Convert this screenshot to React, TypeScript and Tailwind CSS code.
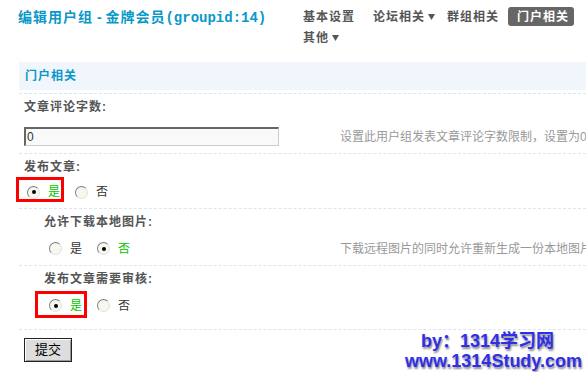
import React from 'react';

type Opt = { label: string; checked?: boolean };

function Radio({ checked }: { checked?: boolean }) {
  return (
    <span className="inline-flex h-[13px] w-[13px] shrink-0 items-center justify-center rounded-full border border-t-[#7f7f7f] border-l-[#7f7f7f] border-r-[#e2e2da] border-b-[#e2e2da] bg-[#f7f7f0]">
      {checked && <span className="h-[4px] w-[4px] rounded-full bg-black" />}
    </span>
  );
}

// radio + label, optionally with the red annotation frame
function Option({ opt, box }: { opt: Opt; box?: string }) {
  return (
    <span className="relative flex h-[16px] items-center gap-[8px]">
      <Radio checked={opt.checked} />
      <span className={opt.checked ? 'text-[#00c800]' : 'text-[#333]'}>{opt.label}</span>
      {box && <span className={`pointer-events-none absolute border-[3px] border-[#f00] ${box}`} />}
    </span>
  );
}

function Arrow() {
  return (
    <svg width="7" height="6" viewBox="0 0 7 6" className="ml-[3px] mt-[1px]">
      <path d="M0 0h7L3.5 6z" fill="currentColor" />
    </svg>
  );
}

export default function App() {
  const nav = [
    { t: '基本设置' },
    { t: '论坛相关', arrow: true },
    { t: '群组相关' },
    { t: '门户相关', active: true },
    { t: '其他', arrow: true },
  ];

  return (
    <div className="relative h-[372px] w-[586px] overflow-hidden bg-white font-['Liberation_Sans','Noto_Sans_CJK_SC',sans-serif] text-[12px]">
      {/* header */}
      <div className="flex h-[62px]">
        <div className="w-[294px] shrink-0 pl-[18px] pt-[8px]">
          <h1 className="whitespace-nowrap text-[14px] font-bold leading-[18px] text-[#0a98c8]">
            <span className="tracking-[1px]">编辑用户组</span>
            <span> - </span>
            <span className="tracking-[1px]">金牌会员</span>
            <span className="font-['Liberation_Mono',monospace]">(groupid:14)</span>
          </h1>
        </div>
        <ul className="flex flex-1 flex-wrap content-start gap-y-[2px] pt-[7px] font-bold text-[#555]">
          {nav.map(n => (
            <li
              key={n.t}
              className={`flex h-[19px] items-center whitespace-nowrap tracking-[1px] ${
                n.active ? 'rounded-[3px] bg-[#666] pl-[9px] pr-[5px] text-white' : n.arrow ? 'pl-[9px] pr-[3px]' : 'px-[9px]'
              }`}
            >
              {n.t}
              {n.arrow && <Arrow />}
            </li>
          ))}
        </ul>
      </div>

      <div className="ml-[19px]">
        <div className="flex h-[28px] items-center bg-[#f1f6fd] pl-[6px] font-bold tracking-[1px] text-[#0a98c8]">门户相关</div>
        <div className="h-[3px]" />

        {/* 文章评论字数 */}
        <div className="border-t border-dashed border-[#d8e7f3]">
          <div className="flex h-[26px] items-center pl-[5px] font-bold tracking-[1px] text-[#555]">文章评论字数:</div>
          <div className="flex h-[33px] items-center">
            <div className="w-[321px] shrink-0 pl-[5px]">
              <input
                readOnly
                value="0"
                className="h-[19px] w-[255px] border-t-2 border-l-2 border-r border-b border-t-[#666] border-l-[#666] border-r-[#ccc] border-b-[#ccc] bg-[#f9f9f9] pl-[1px] text-[12px] text-[#333] outline-none"
              />
            </div>
            <span className="whitespace-nowrap text-[#999]">设置此用户组发表文章评论字数限制，设置为0</span>
          </div>
        </div>

        {/* 发布文章 */}
        <div className="border-t border-dashed border-[#d8e7f3]">
          <div className="flex h-[26px] items-center pl-[5px] font-bold tracking-[1px] text-[#555]">发布文章:</div>
          <div className="flex h-[28px] items-center gap-[15px] pb-[4px] pl-[8px]">
            <Option opt={{ label: '是', checked: true }} box="-left-[11px] -right-[4px] -top-[7px] -bottom-[2px]" />
            <Option opt={{ label: '否' }} />
          </div>
        </div>

        {/* 允许下载本地图片 */}
        <div className="border-t border-dashed border-[#d8e7f3]">
          <div className="flex h-[26px] items-center pl-[25px] font-bold tracking-[1px] text-[#555]">允许下载本地图片:</div>
          <div className="flex h-[30px] items-center pb-[3px]">
            <div className="flex w-[321px] shrink-0 items-center gap-[15px] pl-[30px]">
              <Option opt={{ label: '是' }} />
              <Option opt={{ label: '否', checked: true }} />
            </div>
            <span className="whitespace-nowrap text-[#999]">下载远程图片的同时允许重新生成一份本地图片</span>
          </div>
        </div>

        {/* 发布文章需要审核 */}
        <div className="border-t border-dashed border-[#d8e7f3]">
          <div className="flex h-[26px] items-center pl-[25px] font-bold tracking-[1px] text-[#555]">发布文章需要审核:</div>
          <div className="flex h-[37px] items-center gap-[15px] pb-[10px] pl-[30px]">
            <Option opt={{ label: '是', checked: true }} box="-left-[14px] -right-[5px] -top-[7px] -bottom-[4px]" />
            <Option opt={{ label: '否' }} />
          </div>
        </div>

        <div className="border-t border-dashed border-[#d8e7f3] pl-[5px] pt-[8px]">
          <button className="h-[24px] w-[48px] border border-[#222] bg-[#ddd] text-[13px] text-black shadow-[inset_1px_1px_0_#fff,inset_-1px_-1px_0_#999]">
            提交
          </button>
        </div>
      </div>

      {/* watermark */}
      <div className="absolute left-[421px] top-[331px] whitespace-nowrap text-[18px] font-bold leading-[20px] text-[#2f2fea] [text-shadow:1px_2px_2px_#8c8c8c]">
        by：1314学习网
      </div>
      <div className="absolute left-[405px] top-[351px] whitespace-nowrap text-[18px] font-bold leading-[20px] text-[#2f2fea] [text-shadow:1px_2px_2px_#8c8c8c]">
        www.1314Study.com
      </div>
    </div>
  );
}
